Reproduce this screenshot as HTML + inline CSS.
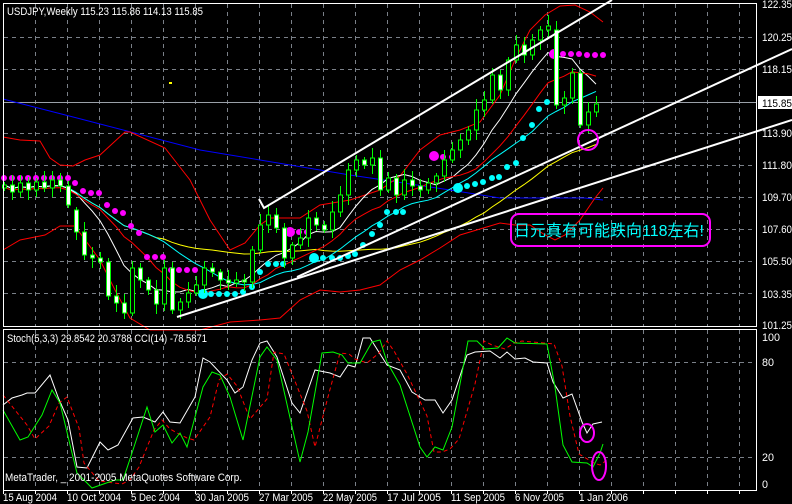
<!DOCTYPE html>
<html><head><meta charset="utf-8"><style>
html,body{margin:0;padding:0;background:#000;width:792px;height:504px;overflow:hidden}
svg{display:block;font-family:"Liberation Sans","Noto Sans CJK SC",sans-serif}
</style></head><body>
<svg id="s" width="792" height="504" xmlns="http://www.w3.org/2000/svg">
<rect width="792" height="504" fill="#000"/>
<g id="grid" stroke="#7a8088" stroke-width="1" stroke-dasharray="4,4"></g>
<g id="chart"></g>
<rect x="3.5" y="3.5" width="753" height="323" fill="none" stroke="#fff"/>
<rect x="3.5" y="329.5" width="753" height="161" fill="none" stroke="#fff"/>
<g fill="#fff" font-size="11">
<text x="7" y="15" textLength="196" lengthAdjust="spacingAndGlyphs">USDJPY,Weekly  115.23 115.86 114.13 115.85</text>
<text x="7" y="342" textLength="200" lengthAdjust="spacingAndGlyphs">Stoch(5,3,3) 29.8542 20.3788  CCI(14) -78.5871</text>
<text x="5" y="481" textLength="237" lengthAdjust="spacingAndGlyphs">MetaTrader, _ 2001-2005 MetaQuotes Software Corp.</text>
</g>
<g id="lbl" fill="#fff" font-size="11"></g>
<rect x="758" y="96" width="34" height="13" fill="#fff"/>
<text x="762" y="107" font-size="11" fill="#000" textLength="30" lengthAdjust="spacingAndGlyphs">115.85</text>
<rect x="511" y="214" width="199" height="32" rx="8" fill="none" stroke="#ff00ff" stroke-width="2"/>
<text x="514" y="236" font-size="16" fill="#00ffff" textLength="190" lengthAdjust="spacingAndGlyphs">日元真有可能跌向118左右!</text>
</svg>
<script>
var NS="http://www.w3.org/2000/svg";
function el(p,t,a){var e=document.createElementNS(NS,t);for(var k in a)e.setAttribute(k,a[k]);p.appendChild(e);return e;}
var G=document.getElementById('grid'),C=document.getElementById('chart'),L=document.getElementById('lbl');
function tx(x,y,s,w){var e=el(L,'text',{x:x,y:y,textLength:w,lengthAdjust:'spacingAndGlyphs'});e.textContent=s;}
[[8,'122.35'],[41,'120.25'],[73,'118.15'],[137,'113.90'],[169,'111.80'],[201,'109.70'],[233,'107.60'],[265,'105.50'],[298,'103.35'],[329,'101.25']].forEach(function(a){tx(762,a[0],a[1],30);});
[[341,'100',18],[366,'80',12],[461,'20',12],[488,'0',6]].forEach(function(a){tx(762,a[0],a[1],a[2]);});
[[3,'15 Aug 2004'],[67,'10 Oct 2004'],[131,'5 Dec 2004'],[195,'30 Jan 2005'],[259,'27 Mar 2005'],[323,'22 May 2005'],[387,'17 Jul 2005'],[451,'11 Sep 2005'],[515,'6 Nov 2005'],[579,'1 Jan 2006']].forEach(function(a){tx(a[0],501,a[1],a[1].length>10?54:49);});
for(var x=35;x<757;x+=32){el(G,'line',{x1:x+.5,y1:4,x2:x+.5,y2:326});el(G,'line',{x1:x+.5,y1:330,x2:x+.5,y2:490});
 el(C,'line',{x1:x+.5,y1:491,x2:x+.5,y2:494,stroke:'#fff'});}
el(C,'line',{x1:3.5,y1:491,x2:3.5,y2:494,stroke:'#fff'});
[37,69,133,165,197,229,261,293].forEach(function(y){el(G,'line',{x1:4,y1:y+.5,x2:756,y2:y+.5});});
[362,457].forEach(function(y){el(G,'line',{x1:4,y1:y+.5,x2:756,y2:y+.5});});
el(C,'line',{x1:4,y1:102.5,x2:757,y2:102.5,stroke:'#9aa0a8'});
var c=[185,192,183,190,182,188,180,186,205,232,255,258,262,296,303,313,268,280,290,304,268,310,302,293,285,268,272,280,283,280,282,250,225,215,228,258,245,238,218,225,230,212,195,170,160,165,158,190,178,195,180,186,190,183,176,160,150,140,130,110,100,75,90,60,45,55,40,30,26,105,98,73,125,112,104];
var n=c.length,o=[],hi=[],lo=[];
for(var i=0;i<n;i++){o[i]=i?c[i-1]:188;if(i==9)o[i]=210;if(i==69)o[i]=30;
 var r1=3+((i*7)%9),r2=3+((i*5)%8);hi[i]=Math.min(o[i],c[i])-r1;lo[i]=Math.max(o[i],c[i])+r2;}
function X(i){return 4+i*8;}
function ma(p,sh){var r=[];for(var i=0;i<n;i++){var s=0,k=0;for(var j=Math.max(0,i-p+1);j<=i;j++){s+=c[j];k++;}r.push(s/k+(sh||0));}return r;}
function line(arr,col,w,start){var pts=[];for(var i=start||0;i<n;i++)pts.push(X(i)+','+arr[i].toFixed(1));el(C,'polyline',{points:pts.join(' '),fill:'none',stroke:col,'stroke-width':w||1});}
el(C,'polyline',{points:'3,99 77,118 200,150 350,175 450,190 500,198 585,198 603,200',fill:'none',stroke:'#0000ff','stroke-width':1});
el(C,'polyline',{points:'3,137 20,140 40,141 50,158 60,165 73,166 85,160 100,155 125,132 130,132 165,148 190,180 210,220 230,250 245,243 260,225 270,218 300,218 320,205 350,200 380,190 400,176 420,150 440,135 460,130 480,122 500,95 515,60 530,30 545,15 560,6 575,5 590,12 603,22',fill:'none',stroke:'#ff0000'});
el(C,'polyline',{points:'3,250 20,240 45,235 60,226 75,226 80,233 100,260 115,290 130,318 150,330 200,330 230,322 260,320 280,318 300,300 320,290 340,292 360,290 380,285 400,270 420,260 440,248 460,235 480,229 500,223 515,225 530,225 545,235 555,240 565,235 580,220 595,198 603,188',fill:'none',stroke:'#ff0000'});
line(ma(40),'#ffff00',1);line(ma(20),'#00ffff',1);line(ma(8),'#ffffff',1);line(ma(13,2),'#ff0000',1);
function dots(col,pts,big){pts.forEach(function(p,k){el(C,'circle',{cx:p[0],cy:p[1],r:(k==0&&big)?5:3,fill:col});});}
var mg1=[];for(var x=4;x<=68;x+=8)mg1.push([x,178]);
mg1=mg1.concat([[75,183],[83,191],[91,193],[99,193],[107,205],[115,211],[123,213],[131,226],[139,233],[147,257],[155,257],[163,257],[171,270],[179,270],[187,270],[195,270]]);
dots('#ff00ff',mg1,false);
dots('#00ffff',[[203,294],[211,294],[219,294],[227,294],[235,294],[243,292],[252,287],[260,272],[268,264],[276,264],[283,264]],true);
dots('#ff00ff',[[290,232],[299,232],[307,232]],true);
dots('#00ffff',[[314,258],[323,258],[332,258],[340,258],[348,256],[355,254],[363,245],[372,234],[380,225],[387,212],[396,212],[403,212]],true);
dots('#ff00ff',[[434,156],[443,157],[452,157]],true);
dots('#00ffff',[[458,188],[467,186],[475,184],[483,182],[492,178],[499,177],[507,167],[516,163],[523,138],[532,125],[539,109],[547,102]],true);
dots('#ff00ff',[[554,54],[563,54],[571,54],[579,54],[587,55],[595,55],[603,55]],true);
for(var i=0;i<n;i++){var x=X(i),b=c[i]<o[i];
 el(C,'line',{x1:x+.5,y1:hi[i],x2:x+.5,y2:lo[i],stroke:'#00ff00'});
 var t=Math.min(o[i],c[i]),h=Math.max(2,Math.abs(o[i]-c[i]));
 el(C,'rect',{x:x-1.5,y:t,width:4,height:h,fill:b?'#000':'#fff',stroke:'#00ff00'});}
el(C,'polyline',{points:'259,199 264,208 612,0',fill:'none',stroke:'#fff','stroke-width':2});
el(C,'line',{x1:177,y1:317,x2:792,y2:120,stroke:'#fff','stroke-width':2});
el(C,'line',{x1:297,y1:277,x2:792,y2:49,stroke:'#fff','stroke-width':2});
el(C,'rect',{x:169,y:82,width:3,height:2,fill:'#ffff00'});
el(C,'circle',{cx:588,cy:140,r:10,fill:'none',stroke:'#ff00ff','stroke-width':2});
var W="3,405 12,398 22,395 27,393 35,393 50,375 58,397 68,420 77,467 87,468 100,442 108,450 118,445 133,418 143,417 155,422 163,412 170,422 180,423 195,397 203,358 210,362 227,380 235,393 243,387 252,360 260,343 267,341 277,357 292,403 300,413 315,370 330,373 340,377 348,365 355,367 363,338 370,338 387,365 400,370 412,392 425,400 435,400 443,413 452,400 467,355 475,352 490,351 500,358 507,352 515,359 525,358 533,362 547,363 553,382 563,398 572,394 582,422 587,433 593,424 602,422";
var Gr="3,410 20,440 28,437 42,415 52,390 60,403 72,453 77,473 92,488 115,480 123,480 132,453 147,407 155,432 163,425 172,443 180,433 187,447 203,387 212,372 220,375 230,397 243,440 260,357 267,347 277,360 300,462 308,432 322,353 333,352 342,355 348,363 360,363 372,342 380,340 387,362 400,385 420,447 427,457 435,447 443,450 452,427 468,341 477,341 485,349 498,348 507,338 515,343 547,344 555,387 563,445 572,462 587,463 593,467 600,453 603,444";
var gp=Gr.split(' ').map(function(p){return p.split(',').map(Number);});
var rp=[];for(var i=0;i<gp.length;i++){var a=gp[Math.max(0,i-1)],b=gp[i];rp.push((b[0]+7)+','+((a[1]+b[1])/2).toFixed(0));}
rp[0]='3,395';rp.pop();rp.push('603,455');
el(C,'polyline',{points:W,fill:'none',stroke:'#fff'});
el(C,'polyline',{points:rp.join(' '),fill:'none',stroke:'#ff0000','stroke-dasharray':'4,3'});
el(C,'polyline',{points:Gr,fill:'none',stroke:'#00ff00'});
el(C,'ellipse',{cx:587,cy:433,rx:7,ry:9,fill:'none',stroke:'#ff00ff','stroke-width':2});
el(C,'ellipse',{cx:599,cy:466,rx:7,ry:14,fill:'none',stroke:'#ff00ff','stroke-width':2});
</script>
</body></html>
